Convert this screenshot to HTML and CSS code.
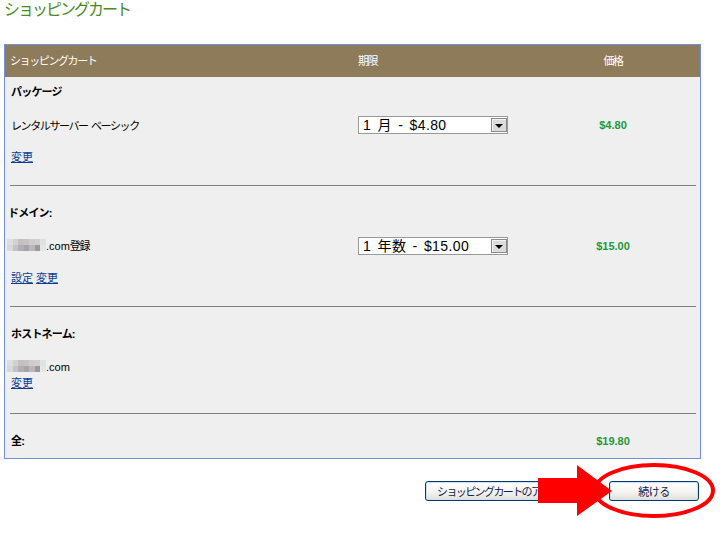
FILE: index.html
```html
<!DOCTYPE html>
<html>
<head>
  <meta charset="utf-8">
  <title>ショッピングカート</title>
  <link rel="stylesheet" href="styles.css">
</head>
<body>
  <h1 class="page-title">ショッピングカート</h1>

  <!-- Cart table -->
  <div class="cart">
    <div class="cart-head grid">
      <div>ショッピングカート</div>
      <div>期限</div>
      <div class="col-price">価格</div>
    </div>

    <!-- Package -->
    <div class="section first">
      <div class="label">パッケージ</div>
      <div class="row grid">
        <div>レンタルサーバー&nbsp; ベーシック</div>
        <div>
          <span class="select">
            <select><option>1 月 - $4.80</option></select>
            <span class="select-btn"></span>
          </span>
        </div>
        <div class="price">$4.80</div>
      </div>
      <div class="links"><a href="#">変更</a></div>
    </div>
    <hr>

    <!-- Domain -->
    <div class="section">
      <div class="label domain-label">ドメイン:</div>
      <div class="row grid">
        <div class="domain"><span class="blur"><i></i><i></i><i></i><i></i><i></i><i></i><i></i><i></i><i></i><i></i><i></i><i></i><i></i><i></i></span><span class="latin">.com</span>登録</div>
        <div>
          <span class="select">
            <select><option>1 年数 - $15.00</option></select>
            <span class="select-btn"></span>
          </span>
        </div>
        <div class="price">$15.00</div>
      </div>
      <div class="links"><a href="#">設定</a> <a href="#">変更</a></div>
    </div>
    <hr>

    <!-- Hostname -->
    <div class="section">
      <div class="label">ホストネーム:</div>
      <div class="host domain"><span class="blur"><i></i><i></i><i></i><i></i><i></i><i></i><i></i><i></i><i></i><i></i><i></i><i></i><i></i><i></i></span><span class="latin">.com</span></div>
      <div class="links tight"><a href="#">変更</a></div>
    </div>
    <hr class="after-host">

    <!-- Total -->
    <div class="section total grid">
      <div class="label">全:</div>
      <div></div>
      <div class="price">$19.80</div>
    </div>
  </div>

  <!-- Buttons -->
  <div class="actions">
    <button class="btn wide">ショッピングカートのアップデート</button>
    <button class="btn">続ける</button>
    <svg class="annotation" width="186" height="64" viewBox="0 0 186 64">
      <ellipse cx="120" cy="30.5" rx="59" ry="25.5" fill="none" stroke="#ff0000" stroke-width="4"/>
      <rect x="4" y="18" width="40" height="25" fill="#ff0000"/>
      <polygon points="43,5 43,56 78,31" fill="#ff0000"/>
    </svg>
  </div>
</body>
</html>
```

FILE: styles.css
```css
html {
  min-height: 100%;
}
body {
  margin: 0;
  padding: 0 4px 40px;
  background-color: #ffffff;
  color: #000000;
  font-family: "Liberation Sans", "Noto Sans CJK JP", sans-serif;
  font-size: 11px;
  letter-spacing: -1.4px;
}
.page-title {
  margin: 0;
  height: 20px;
  line-height: 20px;
  font-size: 16px;
  font-weight: normal;
  color: #4a8a1f;
  letter-spacing: -2px;
}
.cart {
  margin-top: 24px;
  width: 697px;
  box-sizing: border-box;
  border: 1px solid #6f8fe0;
  background-color: #efefef;
}
.grid {
  display: grid;
  grid-template-columns: 347px 200px 110px;
  align-items: center;
}
.cart-head {
  height: 32px;
  line-height: 32px;
  padding-left: 5px;
  grid-template-columns: 348px 200px 110px;
  background-color: #8e7b5a;
  color: #ffffff;
}
.col-price,
.price {
  text-align: center;
}
.section {
  padding: 19px 5px 0 6px;
}
.section.first {
  padding-top: 7px;
}
.label {
  font-weight: bold;
  line-height: 16px;
  letter-spacing: -0.8px;
}
.domain-label {
  margin-left: -3px;
}
.row {
  margin-top: 16px;
  height: 18px;
}
.links {
  margin-top: 15px;
  line-height: 16px;
  letter-spacing: 0;
}
.links.tight {
  margin-top: 0;
}
a {
  color: #0b3c95;
  text-decoration: underline;
}
.price {
  font-weight: bold;
  color: #1b9a3b;
  letter-spacing: 0;
}
hr {
  margin: 20px 4px 0 5px;
  height: 0;
  border: 0;
  border-top: 1px solid #808080;
}
hr.after-host {
  margin-top: 22px;
}
.total {
  padding-bottom: 9px;
}

/* blurred domain name */
.domain {
  margin-left: -4px;
  display: flex;
  align-items: center;
  line-height: 16px;
}
.host {
  margin-top: 17px;
}
.latin {
  letter-spacing: 0;
}
.blur {
  display: inline-grid;
  grid-template-columns: repeat(7, 1fr);
  width: 39px;
  height: 12px;
  margin-top: -2px;
}
.blur i:nth-child(1) { background: #dedede; }
.blur i:nth-child(2) { background: #d2d0d0; }
.blur i:nth-child(3) { background: #c4c0c2; }
.blur i:nth-child(4) { background: #c8c2c2; }
.blur i:nth-child(5) { background: #cfcccc; }
.blur i:nth-child(6) { background: #d0d0d0; }
.blur i:nth-child(7) { background: #dfe2e2; }
.blur i:nth-child(8) { background: #d8d8d8; }
.blur i:nth-child(9) { background: #c6c2c4; }
.blur i:nth-child(10) { background: #b2aeb6; }
.blur i:nth-child(11) { background: #aaa2aa; }
.blur i:nth-child(12) { background: #bcb6ba; }
.blur i:nth-child(13) { background: #9e969e; }
.blur i:nth-child(14) { background: #e2e6e6; }

/* dropdowns */
.select {
  position: relative;
  display: inline-block;
  width: 150px;
  height: 18px;
  vertical-align: top;
}
.select select {
  appearance: none;
  -webkit-appearance: none;
  display: block;
  width: 150px;
  height: 18px;
  margin: 0;
  padding: 0 0 0 4px;
  border: 1px solid #999999;
  border-radius: 0;
  background-color: #ffffff;
  color: #000000;
  font-family: "Liberation Sans", "Noto Sans CJK JP", sans-serif;
  font-size: 14px;
  line-height: 16px;
  letter-spacing: 0.4px;
  word-spacing: 2px;
}
.select-btn {
  position: absolute;
  top: 2px;
  right: 1px;
  width: 14px;
  height: 12px;
  border: 1px solid #8a8a8a;
  background-color: #dcdcdc;
  box-shadow: inset 1px 1px 0 #f4f4f4;
  pointer-events: none;
}
.select-btn::after {
  content: "";
  position: absolute;
  left: 3px;
  top: 5px;
  border-left: 4px solid transparent;
  border-right: 4px solid transparent;
  border-top: 4px solid #000000;
}

/* buttons */
.actions {
  position: relative;
  display: flex;
  justify-content: flex-end;
  gap: 9px;
  width: 697px;
  margin-top: 22px;
  padding-right: 2px;
  box-sizing: border-box;
}
.btn {
  width: 90px;
  height: 20px;
  padding: 0;
  border: 1px solid #003c74;
  border-radius: 3px;
  background: linear-gradient(#ffffff, #f4f4f0 55%, #e2e0d6);
  box-shadow: inset 0 0 0 1px #d2def3;
  color: #10204c;
  font-family: "Liberation Sans", "Noto Sans CJK JP", sans-serif;
  font-size: 11px;
  letter-spacing: -0.5px;
  cursor: pointer;
}
.btn.wide {
  width: 175px;
  padding-left: 11px;
  text-align: left;
  white-space: nowrap;
  overflow: hidden;
  letter-spacing: -1.6px;
}
.annotation {
  position: absolute;
  left: 530px;
  top: -21px;
  display: block;
  overflow: visible;
}
```
